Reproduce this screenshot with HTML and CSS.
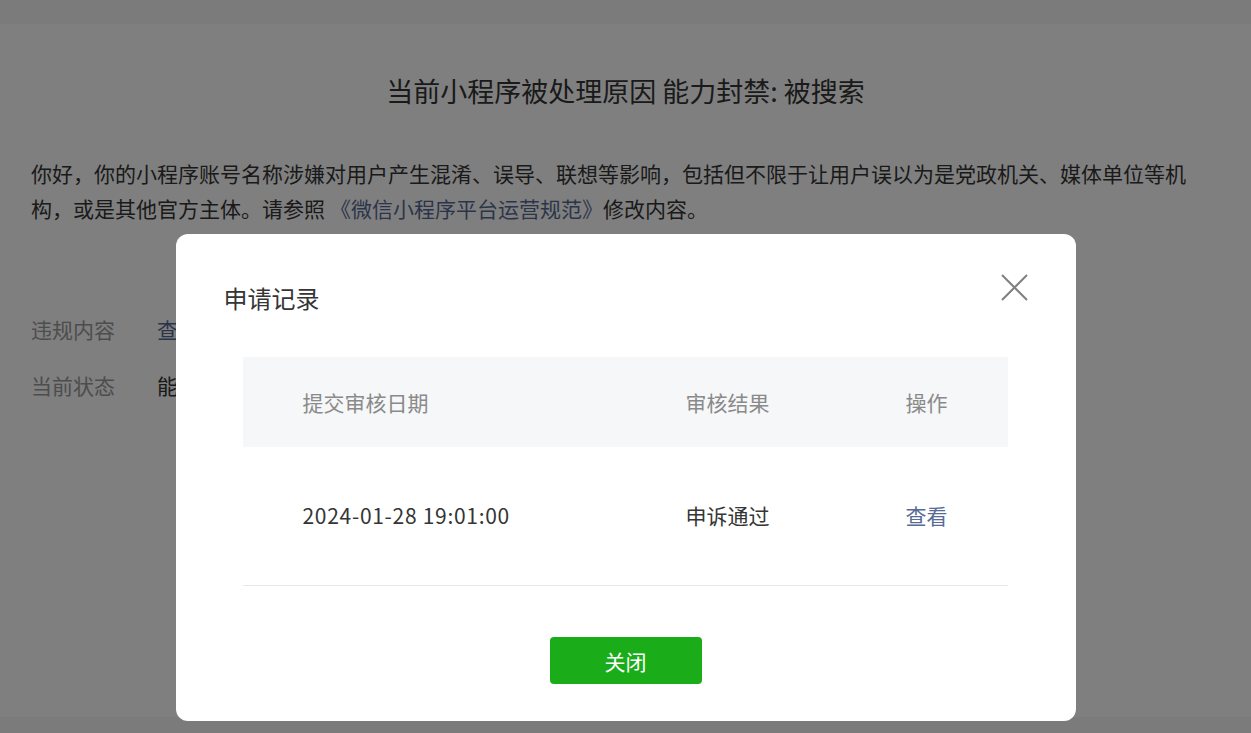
FILE: index.html
```html
<!DOCTYPE html>
<html lang="zh-CN">
<head>
    <meta charset="UTF-8">
    <meta name="viewport" content="width=device-width, initial-scale=1.0">
    <title>申请记录</title>
    <link rel="stylesheet" href="styles.css">
</head>
<body>

<div class="page">
    <h1 class="page-title">当前小程序被处理原因 能力封禁: 被搜索</h1>
    <p class="notice">你好，你的小程序账号名称涉嫌对用户产生混淆、误导、联想等影响，包括但不限于让用户误以为是党政机关、媒体单位等机构，或是其他官方主体。请参照<a class="link" href="#">《微信小程序平台运营规范》</a>修改内容。</p>

    <div class="info">
        <div class="info-row">
            <span class="info-label">违规内容</span>
            <a class="link" href="#">查看详情</a>
        </div>
        <div class="info-row">
            <span class="info-label">当前状态</span>
            <span class="info-value">能力封禁: 被搜索</span>
        </div>
    </div>
</div>

<!-- The Modal -->
<div class="mask">
    <div class="dialog">
        <span class="close">
            <svg width="27" height="27" viewBox="0 0 27 27">
                <path d="M1 1L26 26M26 1L1 26" stroke="#808080" stroke-width="2" fill="none"/>
            </svg>
        </span>
        <h2 class="dialog-title">申请记录</h2>

        <div class="record-table">
            <div class="record-head">
                <span>提交审核日期</span>
                <span>审核结果</span>
                <span>操作</span>
            </div>
            <div class="record-row">
                <span class="record-date">2024-01-28 19:01:00</span>
                <span>申诉通过</span>
                <a class="link" href="#">查看</a>
            </div>
        </div>

        <div class="dialog-foot">
            <button class="btn-primary">关闭</button>
        </div>
    </div>
</div>

</body>
</html>
```

FILE: styles.css
```css
body {
    margin: 0;
    background-color: #f6f6f6;
    font-family: "Noto Sans CJK SC", "Noto Sans", sans-serif;
    color: #353535;
}
.page {
    margin-top: 24px;
    height: 693px;
    background-color: #fff;
    padding: 47px 50px 0 31px;
    box-sizing: border-box;
}
.page-title {
    margin: 0;
    font-size: 27px;
    font-weight: normal;
    line-height: 40px;
    text-align: center;
    padding-left: 19px;
}
.notice {
    margin: 45px 0 0;
    font-size: 21px;
    line-height: 35px;
}
.notice .link {
    margin-left: 5px;
}
.link {
    color: #576b95;
    text-decoration: none;
}
.info {
    margin-top: 86px;
    font-size: 21px;
    line-height: 35px;
}
.info-row {
    display: flex;
    margin-bottom: 21px;
}
.info-label {
    width: 126px;
    color: #9a9a9a;
}

/* Modal styles */
.mask {
    position: fixed;
    left: 0;
    top: 0;
    width: 100%;
    height: 100%;
    background-color: rgba(0,0,0,0.5);
    display: flex;
    justify-content: center;
    align-items: flex-start;
}
.dialog {
    position: relative;
    margin-top: 234px;
    width: 900px;
    background-color: #fff;
    border-radius: 12px;
    padding: 46px 48px 37px;
    box-sizing: border-box;
}
.close {
    position: absolute;
    top: 40px;
    right: 48px;
    width: 27px;
    height: 27px;
    cursor: pointer;
}
.close svg {
    display: block;
}
.dialog-title {
    margin: 0;
    font-size: 24px;
    font-weight: normal;
    line-height: 36px;
    color: #353535;
}
.record-table {
    margin: 41px 20px 0 19px;
    font-size: 21px;
}
.record-head, .record-row {
    display: grid;
    grid-template-columns: 383px 220px 1fr;
    align-items: center;
    padding-left: 60px;
}
.record-head {
    height: 90px;
    background-color: #f6f7f9;
    color: #8a8a8a;
}
.record-row {
    height: 139px;
    padding-bottom: 3px;
    border-bottom: 1px solid #e7e7eb;
    box-sizing: border-box;
    color: #353535;
}
.record-date {
    letter-spacing: 0.7px;
}
.dialog-foot {
    margin-top: 51px;
    text-align: center;
}
.btn-primary {
    width: 152px;
    height: 47px;
    border: none;
    border-radius: 4px;
    background-color: #1aad19;
    color: #fff;
    font-family: inherit;
    font-size: 21px;
    cursor: pointer;
}
```
